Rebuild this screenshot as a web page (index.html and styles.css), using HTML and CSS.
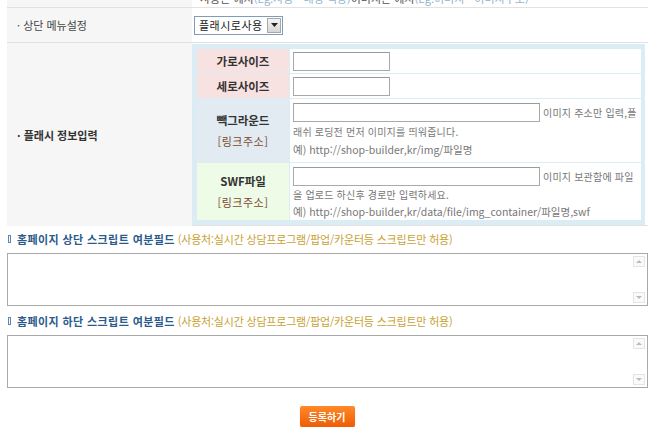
FILE: index.html
```html
<!DOCTYPE html>
<html lang="ko">
<head>
<meta charset="utf-8">
<link rel="stylesheet" href="styles.css">
</head>
<body>
<div class="page">
  <div class="form">
    <div class="row row-cut">
      <div class="label"></div>
      <div class="value cut-text"><span class="gray">사용은 예시</span><span class="blue">(Eg.자동 - 배경 색상)</span> 이미지는 예시<span class="blue">(Eg.이미지 - 이미지주소)</span></div>
    </div>
    <div class="row row-menu">
      <div class="label">· 상단 메뉴설정</div>
      <div class="value">
        <div class="select"><span class="select-text">플래시로사용</span><span class="select-btn"><svg width="7" height="4" viewBox="0 0 7 4"><path d="M0 0h7L3.5 4z" fill="#222"/></svg></span></div>
      </div>
    </div>
    <div class="row row-flash">
      <div class="label bold">· 플래시 정보입력</div>
      <div class="value">
        <div class="inner">
          <div class="ilabel pink">가로사이즈</div>
          <div class="ivalue"><span class="input small"></span></div>
          <div class="ilabel pink">세로사이즈</div>
          <div class="ivalue"><span class="input small"></span></div>
          <div class="ilabel bluegray">빽그라운드<span class="link">[링크주소]</span></div>
          <div class="ivalue tall">
            <div class="line"><span class="input wide"></span><span class="help">이미지 주소만 입력,플</span></div>
            <div class="line help">래쉬 로딩전 먼저 이미지를 띄워줍니다.</div>
            <div class="line help ex">예) http://shop-builder,kr/img/파일명</div>
          </div>
          <div class="ilabel green">SWF파일<span class="link">[링크주소]</span></div>
          <div class="ivalue tall">
            <div class="line"><span class="input wide"></span><span class="help">이미지 보관함에 파일</span></div>
            <div class="line help">을 업로드 하신후 경로만 입력하세요.</div>
            <div class="line help ex">예) http://shop-builder,kr/data/file/img_container/파일명,swf</div>
          </div>
        </div>
      </div>
    </div>
  </div>

  <div class="section-title"><span class="bar"></span><b>홈페이지 상단 스크립트 여분필드</b> <span class="note">(사용처:실시간 상담프로그램/팝업/카운터등 스크립트만 허용)</span></div>
  <div class="textbox">
    <textarea class="ta"></textarea>
    <div class="scroll"><span class="arr up"></span><span class="arr down"></span></div>
  </div>

  <div class="section-title"><span class="bar"></span><b>홈페이지 하단 스크립트 여분필드</b> <span class="note">(사용처:실시간 상담프로그램/팝업/카운터등 스크립트만 허용)</span></div>
  <div class="textbox">
    <textarea class="ta"></textarea>
    <div class="scroll"><span class="arr up"></span><span class="arr down"></span></div>
  </div>

  <div class="actions"><button class="submit">등록하기</button></div>
</div>
</body>
</html>
```
FILE: styles.css
```css
* { box-sizing: border-box; }
html, body { margin: 0; padding: 0; background: #fff; overflow: hidden; }
body {
  font-family: "Noto Sans CJK KR", "Noto Sans", sans-serif;
  font-size: 11px;
  color: #444;
}
.page { width: 650px; padding: 0 2px 0 7px; }
.form { margin-top: -9px; }
.row {
  display: grid;
  grid-template-columns: 185px minmax(0, 1fr);
  border-bottom: 1px solid #e2e2e2;
}
.label {
  background: #f6f6f6;
  padding-left: 10px;
  display: flex;
  align-items: center;
  color: #444;
  letter-spacing: 0;
}
.label.bold { font-weight: bold; color: #333; }
.value { padding-left: 0; display: flex; align-items: center; min-width: 0; }
.row-cut { height: 17px; }
.cut-text { padding-left: 8px; line-height: 14px; align-items: flex-start; color: #555; white-space: nowrap; overflow: hidden; }
.cut-text .blue { color: #8fb4d0; }
.row-menu { height: 35px; }
.row-menu .value { padding-left: 2px; }
.select {
  display: flex; align-items: center;
  height: 19px; width: 89px;
  border: 1px solid #7f9db9;
  background: #fff;
  padding: 0 1px 0 4px;
  justify-content: space-between;
  color: #222;
  letter-spacing: 0.5px;
}
.select-btn {
  width: 14px; height: 15px;
  background: linear-gradient(#f4f4f4, #d6d6d6);
  border: 1px solid #a8a8a8;
  display: flex; align-items: center; justify-content: center;
}
.row-flash { height: 183px; }
.row-flash .value { padding: 1px 3px 1px 0; }
.inner {
  width: 100%;
  height: 181px;
  background: #dcecf4;
  padding: 5px 4px 5px 5px;
  display: grid;
  grid-template-columns: 92px minmax(0, 1fr);
  grid-template-rows: 24px 24px 63px 57px;
  gap: 1px 1px;
  overflow: hidden;
}
.ilabel {
  display: flex; flex-direction: column; align-items: center; justify-content: center;
  font-weight: bold; color: #333; font-size: 11.5px;
  gap: 5px;
}
.pink { background: #f8e1e1; }
.bluegray { background: #e2eaf2; }
.green { background: #eefbe6; }
.link { font-weight: normal; color: #7a4a30; font-size: 11px; letter-spacing: 0.5px; }
.ivalue { background: #fff; display: flex; align-items: center; padding-left: 3px; min-width: 0; overflow: hidden; }
.ivalue.tall { flex-direction: column; align-items: flex-start; justify-content: flex-start; padding-top: 4px; }
.input {
  display: inline-block;
  flex: none;
  height: 19px;
  border: 1px solid #a9a9a9;
  border-top-color: #9a9a9a;
  background: #fff;
}
.input.small { width: 97px; }
.input.wide { width: 247px; }
.line { display: flex; align-items: center; white-space: nowrap; height: 19px; }
.line + .line { height: 18px; }
.help { color: #777; font-size: 10px; letter-spacing: 0.2px; }
.line > .help { margin-left: 3px; }
.help.ex { font-size: 10.5px; letter-spacing: 0; }
.section-title {
  display: flex; align-items: center;
  height: 12px;
  margin-top: 7px;
  margin-bottom: 8px;
  white-space: nowrap;
}
.section-title b { color: #2b5b8c; letter-spacing: 0.4px; }
.bar {
  display: inline-block; width: 3px; height: 8px;
  border: 1px solid #5b88b0;
  margin: 0 6px 0 1px;
}
.note { color: #c8a232; margin-left: 3px; letter-spacing: -0.2px; }
.textbox {
  display: flex;
  height: 53px;
  border: 1px solid #a9a9a9;
  background: #fff;
}
.textbox + .section-title { margin-top: 9px; }
.ta { flex: 1; border: 0; resize: none; outline: none; overflow: hidden; background: #fff; }
.scroll {
  width: 12px; margin: 2px 2px 2px 0;
  display: flex; flex-direction: column; justify-content: space-between;
}
.arr {
  display: flex; width: 12px; height: 11px;
  border: 1px solid #e4e4e4;
  background: #fafafa;
  align-items: center; justify-content: center;
}
.arr::after { content: ""; border-left: 3px solid transparent; border-right: 3px solid transparent; }
.up::after { border-bottom: 3px solid #bbb; }
.down::after { border-top: 3px solid #bbb; }
.actions { display: flex; justify-content: center; padding-top: 18px; padding-right: 1px; }
.submit {
  width: 55px; height: 21px;
  border: 0; border-radius: 2px;
  background: linear-gradient(#ff8a2a, #ee5c04);
  color: #fff; font-family: inherit; font-size: 10px; font-weight: bold;
  box-shadow: 0 1px 1px rgba(0,0,0,0.2);
  padding: 0;
}
```
